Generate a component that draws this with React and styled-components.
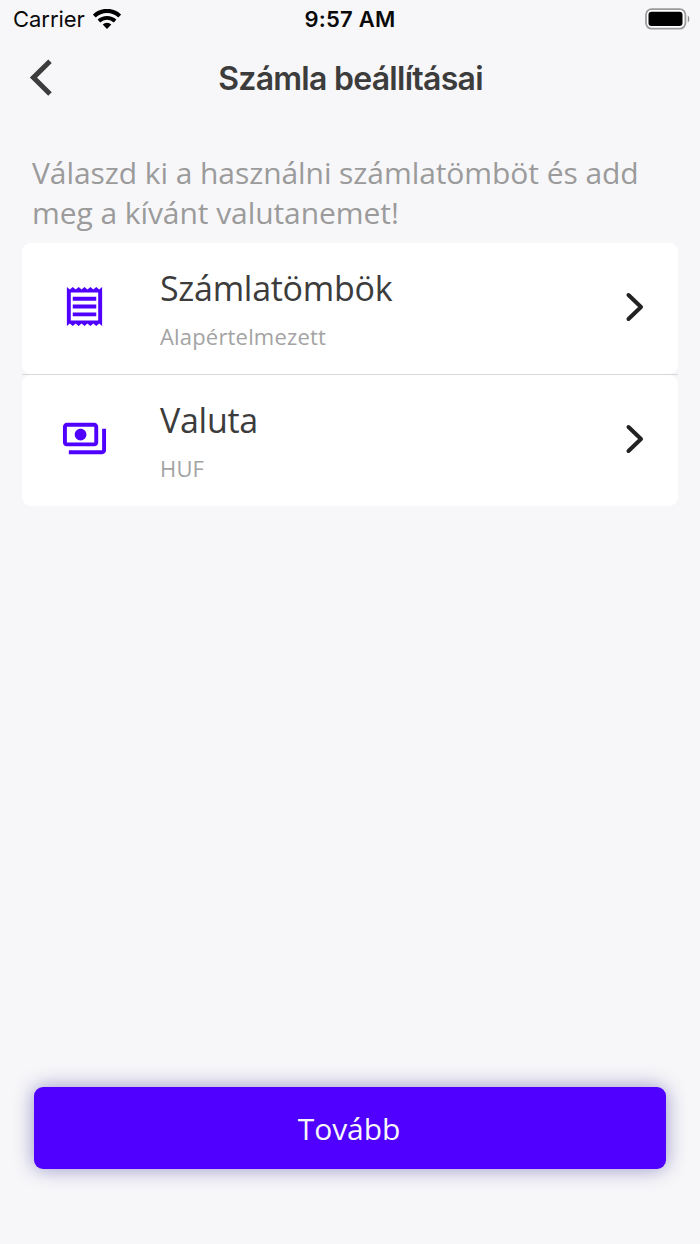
import React from 'react';
import styled, { createGlobalStyle } from 'styled-components';
import { MdOutlinePayments } from 'react-icons/md';

const GlobalStyle = createGlobalStyle`
    * {
        box-sizing: border-box;
    }

    body {
        margin: 0;
        background-color: #f7f7f9;
    }
`;

const Screen = styled.div`
    display: flex;
    flex-direction: column;
    width: 700px;
    height: 1244px;
    background-color: #f7f7f9;
    font-family: 'Open Sans', sans-serif;
`;

const StatusBar = styled.div`
    display: grid;
    grid-template-columns: 1fr auto 1fr;
    align-items: center;
    height: 40px;
    padding: 0 10px 2px 13px;
    font-family: Inter, sans-serif;
    font-size: 22px;
    color: #0a0a0a;
`;

const Carrier = styled.div`
    display: flex;
    align-items: center;
    gap: 8px;
    letter-spacing: -0.05px;
`;

const Time = styled.div`
    padding-right: 3px;
    font-weight: 600;
    letter-spacing: 0.2px;
`;

const Battery = styled.svg`
    justify-self: end;
`;

const NavBar = styled.div`
    display: grid;
    grid-template-columns: 80px 1fr 80px;
    align-items: center;
    height: 76px;
`;

const BackButton = styled.button`
    display: flex;
    padding: 0 0 0 28px;
    border: none;
    background: none;
`;

const Title = styled.h1`
    margin: 0;
    padding: 2px 0 0 1px;
    text-align: center;
    font-family: Inter, sans-serif;
    font-size: 32px;
    font-weight: 600;
    line-height: 40px;
    letter-spacing: -0.73px;
    color: #3c3c3c;
`;

const Description = styled.p`
    margin: 0;
    padding: 37px 32px 0;
    height: 127px;
    font-size: 30px;
    line-height: 40px;
    letter-spacing: -0.07px;
    color: #9b9b9b;
    white-space: pre-line;
`;

const List = styled.div`
    margin: 0 22px;
`;

const Row = styled.div`
    display: flex;
    align-items: center;
    height: 131px;
    padding: 0 27px 3px 39px;
    border-radius: 9px;
    background-color: #ffffff;
`;

const Divider = styled.div`
    height: 1px;
    background-color: #d8d8da;
`;

const RowIcon = styled.div`
    display: flex;
    width: 99px;
    padding-bottom: 1px;
    font-size: 47px;
    color: #4f00ff;
`;

const RowText = styled.div`
    flex: 1;
`;

const RowTitle = styled.div`
    padding-top: 2px;
    font-size: 34px;
    line-height: 46px;
    letter-spacing: -0.28px;
    color: #3c3c3c;
`;

const RowValue = styled.div`
    padding-top: 10px;
    font-size: 22px;
    line-height: 30px;
    letter-spacing: 0.18px;
    color: #a3a3a3;
`;

const Footer = styled.div`
    margin-top: auto;
    padding: 0 34px 75px;
`;

const NextButton = styled.button`
    display: block;
    width: 100%;
    height: 82px;
    padding: 0 2px 0 0;
    border: none;
    border-radius: 9px;
    background-color: #4f00ff;
    box-shadow: 0 0 20px rgba(40, 30, 140, 0.46);
    font-family: inherit;
    font-size: 30px;
    letter-spacing: -0.1px;
    color: #f7f7f9;
`;

function ReceiptIcon() {
    return (
        <svg width="1em" height="1em" viewBox="0 0 24 24" fill="currentColor">
            <path
                fillRule="evenodd"
                d="M3 2.1l1.5 1.2L6 2.1l1.5 1.2L9 2.1l1.5 1.2L12 2.1l1.5 1.2L15 2.1l1.5 1.2L18 2.1l1.5 1.2L21 2.1v19.8l-1.5-1.2-1.5 1.2-1.5-1.2-1.5 1.2-1.5-1.2-1.5 1.2-1.5-1.2L9 21.9l-1.5-1.2L6 21.9l-1.5-1.2L3 21.9zM5 4.9v14.2h14V4.9z"
            />
            <path d="M6 7h12v2H6zM6 11h12v2H6zM6 15h12v2H6z" />
        </svg>
    );
}

function WifiIcon() {
    return (
        <svg width="28" height="20" viewBox="0 0 28 20" fill="none" stroke="#000">
            <path d="M1.3 7a18.3 18.3 0 0 1 25.4 0" strokeWidth="4.1" />
            <path d="M5.9 12a11.8 11.8 0 0 1 16.2 0" strokeWidth="3.8" />
            <path d="M14 20l-4.3-4.4a6.2 6.2 0 0 1 8.6 0z" fill="#000" stroke="none" />
        </svg>
    );
}

function BatteryIcon() {
    return (
        <Battery width="45" height="22" viewBox="0 0 45 22">
            <rect x="1" y="1.2" width="39.4" height="19.4" rx="5.5" fill="#fff" stroke="#9b9b9d" strokeWidth="1.8" />
            <rect x="3.5" y="3.8" width="34" height="14.2" rx="3" fill="#000" />
            <path d="M42.8 7.5c2 1.2 2 5.8 0 7z" fill="#8c8c8e" />
        </Battery>
    );
}

const settings = [
    { id: 'book', icon: ReceiptIcon, title: 'Számlatömbök', value: 'Alapértelmezett' },
    { id: 'currency', icon: MdOutlinePayments, title: 'Valuta', value: 'HUF' },
];

function SettingRow({ icon: Icon, title, value }) {
    return (
        <Row>
            <RowIcon><Icon /></RowIcon>
            <RowText>
                <RowTitle>{title}</RowTitle>
                <RowValue>{value}</RowValue>
            </RowText>
            <svg width="28" height="32" viewBox="0 0 28 32" fill="none" stroke="#222" strokeWidth="4" strokeLinecap="round" strokeLinejoin="round">
                <path d="M5.5 4l12.5 12L5.5 28" />
            </svg>
        </Row>
    );
}

function App() {
    return (
        <Screen>
            <GlobalStyle />
            <StatusBar>
                <Carrier>
                    Carrier
                    <WifiIcon />
                </Carrier>
                <Time>9:57 AM</Time>
                <BatteryIcon />
            </StatusBar>
            <NavBar>
                <BackButton>
                    <svg width="26" height="40" viewBox="0 0 26 40" fill="none" stroke="#3c3c3c" strokeWidth="5">
                        <path d="M22 3.2L5.4 19.6L22 36" />
                    </svg>
                </BackButton>
                <Title>Számla beállításai</Title>
            </NavBar>
            <Description>
                {'Válaszd ki a használni számlatömböt és add\nmeg a kívánt valutanemet!'}
            </Description>
            <List>
                {settings.map((item, index) => (
                    <React.Fragment key={item.id}>
                        {index > 0 && <Divider />}
                        <SettingRow {...item} />
                    </React.Fragment>
                ))}
            </List>
            <Footer>
                <NextButton>Tovább</NextButton>
            </Footer>
        </Screen>
    );
}

export default App;
